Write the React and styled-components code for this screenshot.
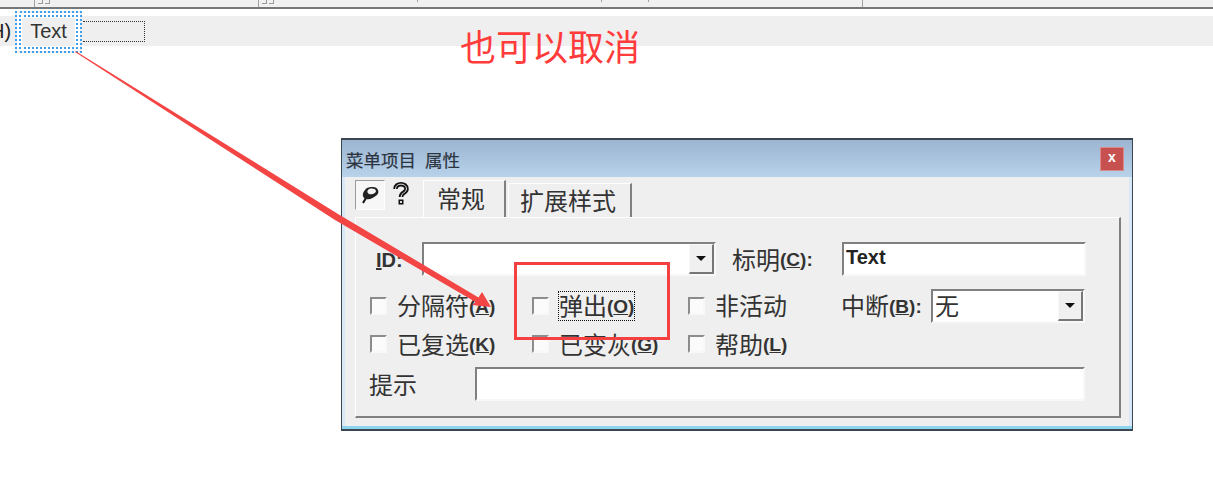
import React from 'react'
import styled, { createGlobalStyle } from 'styled-components'

const CJK = `"Noto Sans CJK SC", "Liberation Sans", sans-serif`
const LATIN = `"Liberation Sans", "Noto Sans CJK SC", sans-serif`

const GlobalStyle = createGlobalStyle`
  html, body {
    margin: 0;
    background: #fff;
    overflow: hidden;
  }
`

const App = () => {
  return (
    <Page>
      <GlobalStyle />
      <TopStrip>
        <Tick $left={34}><Grip><GripMark /><GripMark /></Grip></Tick>
        <Tick $left={223}><Grip><GripMark /><GripMark /></Grip></Tick>
        <Tick $left={158} $short />
        <Tick $left={183} $short />
        <Tick $left={46} $short />
        <Tick $left={213} />
      </TopStrip>
      <MenuBar>
        <MenuCut>H)</MenuCut>
        <MenuItem>Text</MenuItem>
        <NewItem />
      </MenuBar>

      <Dialog>
        <TitleBar>
          <Title>菜单项目 属性</Title>
          <CloseButton>x</CloseButton>
        </TitleBar>
        <Body>
          <TabRow>
            <PinButton>
              <svg width="22" height="22" viewBox="0 0 22 22">
                <path d="M4 19 L7 14" stroke="#111" strokeWidth="2" />
                <path d="M6 6 C3 9 3 14 7 15 C11 16 14 14 18 11 C21 8 19 3 14 3 C11 3 8 3 6 6 Z" fill="#222" />
                <path d="M9 6 C11 4 16 4 17 7 C17 9 13 11 10 10 C8 9 8 7 9 6 Z" fill="#f4f4f4" />
              </svg>
            </PinButton>
            <HelpIcon>
              <svg width="18" height="26" viewBox="0 0 18 26">
                <path d="M3.5 8 C3.5 1.5 14.5 1.5 14.5 8 C14.5 12 9 11.5 9 16" fill="none" stroke="#111" strokeWidth="4.5" />
                <path d="M3.5 8 C3.5 1.5 14.5 1.5 14.5 8 C14.5 12 9 11.5 9 16" fill="none" stroke="#ddd" strokeWidth="1" />
                <rect x="6.5" y="18.5" width="5" height="5" fill="#111" />
                <rect x="8" y="20" width="2" height="2" fill="#ddd" />
              </svg>
            </HelpIcon>
            <Tab $active $left={13} $padLeft={13} $padRight={19}>常规</Tab>
            <Tab $left={2} $padLeft={11} $padRight={14}>扩展样式</Tab>
          </TabRow>
          <Panel>
            <TopRow>
              <FieldLabel $width={46} $pad={20}>
                <Mnemonic $big><u>I</u>D:</Mnemonic>
              </FieldLabel>
              <Select $width={294} />
              <FieldLabel $width={110} $pad={16}>
                标明<Mnemonic>(<u>C</u>):</Mnemonic>
              </FieldLabel>
              <TextField $width={244}>Text</TextField>
            </TopRow>
            <CheckRow $top={11}>
              <Check label="分隔符" letter="A" />
              <Check label="弹出" letter="O" focused />
              <Check label="非活动" />
              <BreakField>
                <BreakLabel>中断<Mnemonic>(<u>B</u>):</Mnemonic></BreakLabel>
                <Select $width={154} value="无" />
              </BreakField>
            </CheckRow>
            <CheckRow $top={6}>
              <Check label="已复选" letter="K" />
              <Check label="已变灰" letter="G" />
              <Check label="帮助" letter="L" />
            </CheckRow>
            <HintRow>
              <HintLabel>提示</HintLabel>
              <TextField $width={610} />
            </HintRow>
          </Panel>
        </Body>
      </Dialog>

      <Note>也可以取消</Note>
      <RedBox />
      <ArrowLayer width="1213" height="491" viewBox="0 0 1213 491">
        <path d="M75 52 L75.8 51.2 L338 214 L478.5 297.5 L482 292 L491 307 L472 305 L475.5 302 L335 220 Z" fill="#f44545" />
      </ArrowLayer>
    </Page>
  )
}

const Check = ({ label, letter, focused }) => (
  <CheckCell>
    <CheckBox />
    <CheckText $focused={focused}>
      {label}
      {letter && <Mnemonic>(<u>{letter}</u>)</Mnemonic>}
    </CheckText>
  </CheckCell>
)

const Select = ({ $width, value }) => (
  <SelectBox $width={$width}>
    <SelectValue>{value}</SelectValue>
    <SelectButton>
      <Caret />
    </SelectButton>
  </SelectBox>
)

export default App

const Page = styled.div`
  position: relative;
  width: 1213px;
  height: 491px;
  overflow: hidden;
  background: #fff;
  font-family: ${CJK};
`

const TopStrip = styled.div`
  display: flex;
  height: 7px;
  background: #f0f0f0;
  border-bottom: 2px solid #777;
`

const Tick = styled.div`
  display: flex;
  align-items: flex-start;
  margin-left: ${p => p.$left}px;
  height: ${p => (p.$short ? 2 : 7)}px;
  border-left: 1px solid #a0a0a0;
`

const Grip = styled.div`
  display: flex;
  gap: 2px;
  width: 12px;
  margin: 0 -16px 0 3px;
`

const GripMark = styled.div`
  box-sizing: border-box;
  width: 5px;
  height: 4px;
  border-right: 1px solid #999;
  border-bottom: 1px solid #999;
`

const MenuBar = styled.div`
  display: flex;
  align-items: center;
  height: 30px;
  margin-top: 7px;
  background: #efefef;
`

const MenuCut = styled.span`
  width: 21px;
  margin-left: -10px;
  margin-right: 4px;
  font: 20px ${LATIN};
  color: #222;
  flex-shrink: 0;
`

const MenuItem = styled.div`
  box-sizing: border-box;
  width: 67px;
  height: 42px;
  margin-top: 2px;
  padding-bottom: 1px;
  flex-shrink: 0;
  display: flex;
  align-items: center;
  justify-content: center;
  background: #efefef;
  box-shadow: inset 0 0 0 5px #fff;
  border: 2px dotted #3da0ee;
  outline: 2px dotted #3da0ee;
  outline-offset: -6px;
  font: 20px ${LATIN};
  color: #333;
`

const NewItem = styled.div`
  box-sizing: border-box;
  width: 62px;
  height: 21px;
  margin-left: 1px;
  border: 1px dotted #333;
  border-left: 0;
`

const Dialog = styled.div`
  box-sizing: border-box;
  width: 792px;
  height: 293px;
  margin: 92px 0 0 341px;
  background: #d8e8f6;
  border: 1px solid #3a4650;
  border-bottom: 2px solid #3a4650;
  border-top: 2px solid #3a4650;
  box-shadow: inset 0 -3px 0 #8fd4ee;
  display: flex;
  flex-direction: column;
`

const TitleBar = styled.div`
  height: 37px;
  flex-shrink: 0;
  display: flex;
  align-items: center;
  justify-content: space-between;
  padding: 0 8px 0 4px;
  background: linear-gradient(#9bb5d2, #b8d2ea);
`

const Title = styled.div`
  font-size: 17.5px;
  word-spacing: 5px;
  color: #2c3440;
  -webkit-text-stroke: 0.2px #2c3440;
  margin-top: 2px;
`

const CloseButton = styled.div`
  box-sizing: border-box;
  width: 24px;
  height: 24px;
  display: flex;
  align-items: center;
  justify-content: center;
  background: #c75050;
  border: 1px solid #d88a8a;
  color: #fff;
  font: bold 14px ${LATIN};
  padding-bottom: 3px;
`

const Body = styled.div`
  flex: 1;
  margin: 0 3px 3px 3px;
  padding: 0 10px;
  background: #efefef;
  display: flex;
  flex-direction: column;
`

const TabRow = styled.div`
  display: flex;
  align-items: flex-start;
  height: 40px;
  flex-shrink: 0;
`

const PinButton = styled.div`
  box-sizing: border-box;
  width: 30px;
  height: 30px;
  margin-top: 3px;
  display: flex;
  align-items: center;
  justify-content: center;
  background: #f7f7f7;
  border: 1px solid;
  border-color: #999 #fff #fff #999;
`

const HelpIcon = styled.div`
  width: 18px;
  margin: 4px 0 0 7px;
  display: flex;
`

const Tab = styled.div`
  box-sizing: border-box;
  height: ${p => (p.$active ? 38 : 34)}px;
  margin-top: ${p => (p.$active ? 3 : 6)}px;
  margin-left: ${p => p.$left}px;
  padding: 0 ${p => p.$padRight}px ${p => (p.$active ? 4 : 2)}px ${p => p.$padLeft}px;
  display: flex;
  align-items: center;
  font-size: 24px;
  color: #333;
  background: #efefef;
  border-top: 1px solid #fff;
  border-left: 1px solid #fff;
  border-right: 2px solid #808080;
`

const Panel = styled.div`
  box-sizing: border-box;
  width: 766px;
  height: 201px;
  padding-top: 24px;
  background: #efefef;
  border-top: 1px solid #fff;
  border-left: 1px solid #fff;
  border-right: 2px solid #808080;
  border-bottom: 2px solid #808080;
`

const TopRow = styled.div`
  display: flex;
  align-items: center;
  height: 34px;
`

const FieldLabel = styled.div`
  box-sizing: border-box;
  width: ${p => p.$width + p.$pad}px;
  padding: 0 0 2px ${p => p.$pad}px;
  display: flex;
  align-items: center;
  white-space: nowrap;
  font-size: 24px;
  color: #333;
`

const Mnemonic = styled.span`
  margin-top: 4px;
  font: bold ${p => (p.$big ? 20 : 19)}px ${LATIN};
  color: #333;
`

const sunken = `
  box-sizing: border-box;
  background: #fff;
  border: 2px solid;
  border-color: #808080 #f8f8f8 #f8f8f8 #808080;
`

const SelectBox = styled.div`
  ${sunken}
  width: ${p => p.$width}px;
  height: 34px;
  flex-shrink: 0;
  display: flex;
  justify-content: space-between;
`

const SelectValue = styled.div`
  padding-left: 2px;
  font-size: 24px;
  line-height: 27px;
  color: #333;
`

const SelectButton = styled.div`
  box-sizing: border-box;
  width: 25px;
  display: flex;
  align-items: center;
  justify-content: center;
  background: #f0f0f0;
  border: 1px solid;
  border-color: #f8f8f8 #777 #777 #f8f8f8;
  border-width: 1px 2px 2px 1px;
`

const Caret = styled.div`
  width: 0;
  height: 0;
  border-left: 5px solid transparent;
  border-right: 5px solid transparent;
  border-top: 5px solid #111;
`

const TextField = styled.div`
  ${sunken}
  width: ${p => p.$width}px;
  height: 34px;
  flex-shrink: 0;
  padding-left: 2px;
  font: bold 20px/26px ${LATIN};
  color: #222;
`

const CheckRow = styled.div`
  display: grid;
  grid-template-columns: 162px 156px 155px 1fr;
  align-items: center;
  height: 34px;
  margin-top: ${p => p.$top}px;
  padding-left: 14px;
`

const CheckCell = styled.div`
  display: flex;
  align-items: center;
  gap: 10px;
`

const CheckBox = styled.div`
  box-sizing: border-box;
  width: 17px;
  height: 18px;
  flex-shrink: 0;
  background: #fbfbfb;
  border: 2px solid;
  border-color: #8c8c8c #f8f8f8 #f8f8f8 #8c8c8c;
`

const CheckText = styled.div`
  box-sizing: border-box;
  height: 28px;
  padding-bottom: 2px;
  display: flex;
  align-items: center;
  white-space: nowrap;
  font-size: 24px;
  color: #333;
  outline: ${p => (p.$focused ? '1px dotted #111' : 'none')};
`

const BreakField = styled.div`
  display: flex;
  align-items: center;
  justify-content: space-between;
  width: 244px;
  margin-left: -2px;
`

const BreakLabel = styled.div`
  display: flex;
  align-items: center;
  padding-bottom: 2px;
  white-space: nowrap;
  font-size: 24px;
  color: #333;
`

const HintRow = styled.div`
  display: flex;
  align-items: center;
  height: 34px;
  margin-top: 6px;
  padding-left: 13px;
`

const HintLabel = styled.div`
  width: 106px;
  padding-bottom: 2px;
  font-size: 24px;
  color: #333;
`

const Note = styled.div`
  position: absolute;
  left: 460px;
  top: 19px;
  font-size: 36px;
  line-height: 52px;
  color: #ff3b3b;
`

const RedBox = styled.div`
  position: absolute;
  left: 514px;
  top: 262px;
  box-sizing: border-box;
  width: 156px;
  height: 78px;
  border: 3px solid #f44040;
`

const ArrowLayer = styled.svg`
  position: absolute;
  left: 0;
  top: 0;
`
